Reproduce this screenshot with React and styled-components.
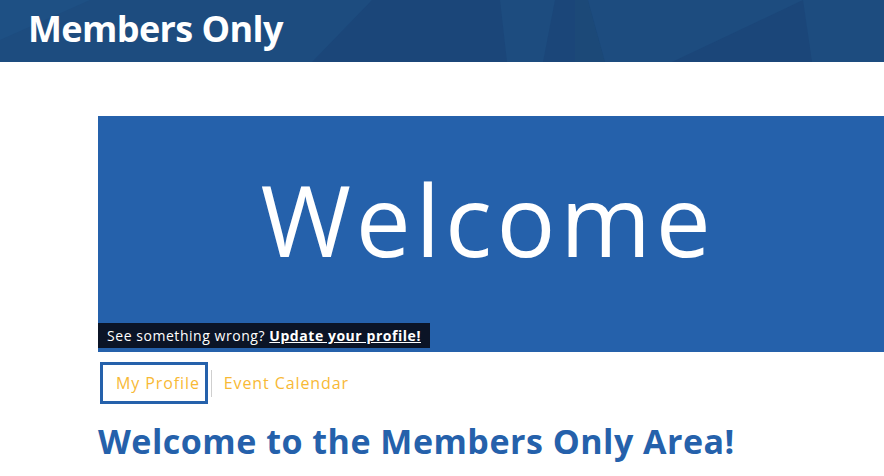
import React from "react";
import styled, { createGlobalStyle } from "styled-components";

const GlobalStyle = createGlobalStyle`
  body {
    margin: 0;
    background: #ffffff;
    font-family: "Open Sans", "Liberation Sans", sans-serif;
  }
`;

const HeaderArt = () => (
  <ArtSvg viewBox="0 0 884 62" preserveAspectRatio="none">
    <polygon points="0,0 372,0 312,62 0,62" fill="#1d4c7f" />
    <polygon points="0,0 90,0 0,40" fill="#1e5084" />
    <polygon points="500,0 555,0 543,62 507,62" fill="#1d4c7f" />
    <polygon points="575,0 588,0 605,62 575,62" fill="#1c4978" />
    <polygon points="588,0 803,0 672,62 605,62" fill="#1d4c7f" />
    <polygon points="803,0 884,0 884,62 812,62" fill="#1d4c7f" />
  </ArtSvg>
);

const App = () => {
  return (
    <>
      <GlobalStyle />
      <Header>
        <HeaderArt />
        <SiteTitle>Members Only</SiteTitle>
      </Header>
      <Main>
        <Banner>
          <BannerTitle>Welcome</BannerTitle>
          <Notice>
            See something wrong? <NoticeLink href="#">Update your profile!</NoticeLink>
          </Notice>
        </Banner>
        <Tabs>
          <Tab $active>My Profile</Tab>
          <Divider />
          <Tab>Event Calendar</Tab>
        </Tabs>
        <Heading>Welcome to the Members Only Area!</Heading>
      </Main>
    </>
  );
};

const Header = styled.header`
  position: relative;
  display: flex;
  align-items: center;
  height: 62px;
  padding: 0 0 4px 28px;
  box-sizing: border-box;
  background: #1b4679;
  overflow: hidden;
`;

const ArtSvg = styled.svg`
  position: absolute;
  inset: 0;
  width: 100%;
  height: 100%;
`;

const SiteTitle = styled.h1`
  position: relative;
  margin: 0;
  color: #ffffff;
  font-size: 36px;
  font-weight: 700;
  line-height: 1;
  letter-spacing: -0.6px;
`;

const Main = styled.main`
  padding: 54px 0 0 98px;
`;

const Banner = styled.section`
  position: relative;
  display: flex;
  align-items: center;
  justify-content: center;
  height: 236px;
  padding: 0 6px 30px 0;
  box-sizing: border-box;
  background: #2561ab;
`;

const BannerTitle = styled.h2`
  margin: 0;
  color: #ffffff;
  font-size: 98px;
  font-weight: 400;
  line-height: 1;
  letter-spacing: 4.7px;
`;

const Notice = styled.div`
  position: absolute;
  left: 0;
  bottom: 4px;
  padding: 0 9px;
  background: #0b1426;
  color: #ffffff;
  font-size: 14px;
  line-height: 25px;
  letter-spacing: 0.55px;
  white-space: nowrap;
`;

const NoticeLink = styled.a`
  color: #ffffff;
  font-weight: 700;
  text-decoration: underline;
`;

const Tabs = styled.nav`
  display: flex;
  align-items: center;
  margin: 10px 0 0 2px;
`;

const Tab = styled.a`
  display: flex;
  align-items: center;
  height: 42px;
  padding: 0 5px 0 ${(p) => (p.$active ? 13 : 9)}px;
  box-sizing: border-box;
  border: 3px solid ${(p) => (p.$active ? "#2561ab" : "transparent")};
  color: #f8b935;
  font-size: 16px;
  letter-spacing: 0.9px;
  cursor: pointer;
`;

const Divider = styled.span`
  width: 1px;
  height: 27px;
  margin-left: 3px;
  background: #cfcfcf;
`;

const Heading = styled.h2`
  margin: 17px 0 0;
  color: #2561ab;
  font-size: 34px;
  font-weight: 700;
  line-height: 1.2;
  letter-spacing: 0.5px;
`;

export default App;
